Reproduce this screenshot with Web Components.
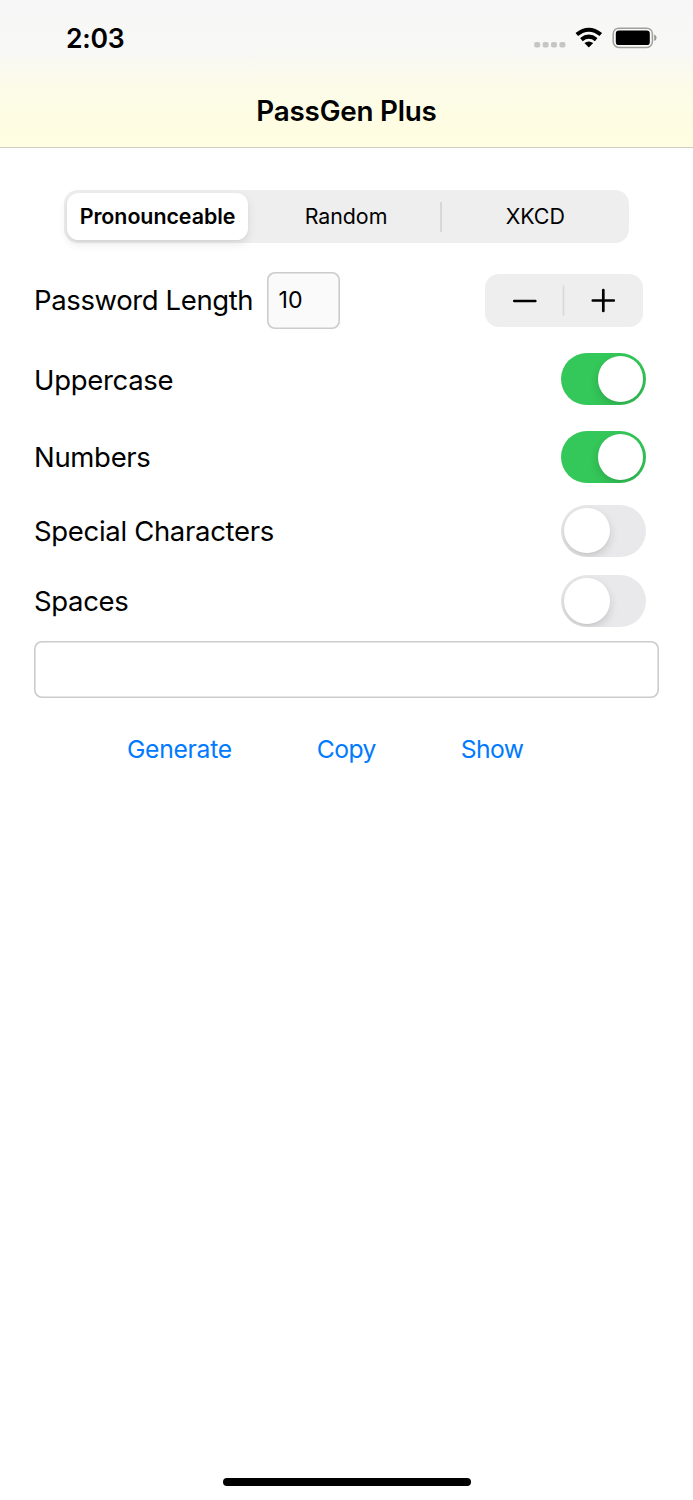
<!DOCTYPE html>
<html lang="en">
<head>
<meta charset="utf-8">
<title>PassGen Plus</title>
<style>
html,body{margin:0;background:#fff}
body{font-family:Inter,"Liberation Sans",sans-serif;color:#000}
</style>
</head>
<body>
<pass-app></pass-app>
<script>
const define=(name,html)=>customElements.define(name,class extends HTMLElement{
  constructor(){super();this.attachShadow({mode:'open'}).innerHTML=html;}
});

define('status-bar',`<style>
:host{display:flex;justify-content:space-between;height:76px;padding:0 36px 0 66px;box-sizing:border-box}
time{font-size:26.6px;font-weight:560;line-height:32px;margin-top:22px;letter-spacing:-.3px}
svg{display:block;margin-top:22px}
</style>
<time>2:03</time>
<svg width="124" height="32" viewBox="533 22 124 32">
<g fill="#c6c6c3"><rect x="534.2" y="42" width="6" height="5.6" rx="1.8"/><rect x="542.6" y="42" width="6" height="5.6" rx="1.8"/><rect x="551" y="42" width="6" height="5.6" rx="1.8"/><rect x="559.4" y="42" width="6" height="5.6" rx="1.8"/></g>
<g fill="none" stroke="#000" stroke-width="4.1"><path d="M576.8 34.5Q588.8 25 600.8 34.5"/><path d="M581.4 39.6Q588.8 33.8 596.2 39.6"/></g>
<path d="M584.4 43.1Q588.8 39.8 593.2 43.1L589.3 47Q588.8 47.5 588.3 47Z"/>
<rect x="613.2" y="28.2" width="39.2" height="19.2" rx="5.6" fill="none" stroke="#a0a09e" stroke-width="1.5"/>
<rect x="615.8" y="30.6" width="34" height="14.5" rx="3.2"/>
<path d="M654.2 34.5Q656.6 35.4 656.6 37.8Q656.6 40.2 654.2 41.1Z" fill="#999997"/>
</svg>`);

define('nav-bar',`<style>
:host{display:block;height:148px;box-sizing:border-box;border-bottom:1px solid #cfcfc0;background:linear-gradient(#f7f7f8 0,#f8f8f5 36%,#fcfbe9 58%,#fefde3 82%,#fffee2 100%)}
h1{margin:18px 0 0;text-align:center;font-size:27.8px;line-height:34px;font-weight:560;letter-spacing:-.22px}
</style><status-bar></status-bar><h1><slot></slot></h1>`);

define('segmented-control',`<style>
:host{display:grid;grid-template-columns:187.5px 189px 1fr;height:53px;margin:42px 64px 0;border-radius:14px;background:#eeeeef;align-items:center;font-size:21.4px}
span{text-align:center}
.on{box-sizing:border-box;height:47px;margin-left:3px;margin-right:3.5px;border-radius:11.5px;background:#fff;box-shadow:0 4px 10px rgba(0,0,0,.1),0 1px 2px rgba(0,0,0,.03);line-height:47px;font-weight:560;letter-spacing:-.05px}
.mid,.last{height:30px;line-height:28px;letter-spacing:-.05px}
.last{border-left:2px solid #d8d8da;margin-left:-1px}
</style><span class="on"><slot name="a"></slot></span><span class="mid"><slot name="b"></slot></span><span class="last"><slot name="c"></slot></span>`);

define('text-field',`<style>
:host{display:block;box-sizing:border-box;height:57px;border-radius:8px;background:var(--fill,#fff);box-shadow:inset 0 0 0 1.6px #ccc;padding-left:12px;font-size:23.2px;line-height:56px}
</style><slot></slot>`);

define('step-control',`<style>
:host{display:block;width:157.5px;height:53px;border-radius:14px;background:#eeeeef}
svg{display:block}
</style><svg width="157" height="53" fill="none" stroke="#000" stroke-width="2.7" stroke-linecap="round"><path d="M29.3 27H50.3M107.8 26.5H128.8M118.3 16V37"/><path d="M78.5 12V41" stroke="#d8d8da" stroke-width="1.6"/></svg>`);

define('toggle-switch',`<style>
:host{display:block;width:85px;height:52px;border-radius:26px;background:#e9e9eb;overflow:hidden}
i{display:block;width:45.5px;height:45.5px;margin:3px;border-radius:50%;background:#fff;box-shadow:0 4px 10px rgba(0,0,0,.14),0 1px 2px rgba(0,0,0,.04)}
:host([on]){background:#34c759}
:host([on]) i{margin-left:36.5px}
</style><i></i>`);

define('option-row',`<style>
:host{display:flex;align-items:center;justify-content:space-between;height:52px;font-size:27.5px;letter-spacing:-.32px}
</style><slot></slot><slot name="control"></slot>`);

define('link-button',`<style>
:host{display:block;color:#007aff;font-size:24.7px;line-height:32px;letter-spacing:-.3px}
:host(.tight){letter-spacing:-.6px}
</style><slot></slot>`);

define('home-indicator',`<style>
:host{display:block;width:248px;height:8px;border-radius:4px;background:#000;margin:auto 223px 14px 222.5px}
</style>`);

define('pass-app',`<style>
:host{display:flex;flex-direction:column;height:1500px;width:693px;background:#fff;overflow:hidden}
.length{display:flex;align-items:center;margin:29px 50.5px 0 34px;height:57px;font-size:27.5px}
.length span{letter-spacing:-.38px;padding-bottom:2px}
.length text-field{width:73.5px;margin-left:auto;margin-right:145px;--fill:#fafafa}
.options{display:flex;flex-direction:column;margin:24px 47px 0 34px}
option-row:first-child span{padding-top:2px}
option-row+option-row{margin-top:26px}
option-row:nth-child(3){margin-top:21.5px}
option-row:nth-child(4){margin-top:18.5px}
.result{margin:14px 34px 0}
.actions{display:flex;margin:35px 0 0 127px}
.actions link-button+link-button{margin-left:85px}
</style>
<nav-bar>PassGen Plus</nav-bar>
<segmented-control><span slot="a">Pronounceable</span><span slot="b">Random</span><span slot="c">XKCD</span></segmented-control>
<div class="length"><span>Password Length</span><text-field>10</text-field><step-control></step-control></div>
<div class="options">
<option-row><span>Uppercase</span><toggle-switch slot="control" on></toggle-switch></option-row>
<option-row><span>Numbers</span><toggle-switch slot="control" on></toggle-switch></option-row>
<option-row><span>Special Characters</span><toggle-switch slot="control"></toggle-switch></option-row>
<option-row><span>Spaces</span><toggle-switch slot="control"></toggle-switch></option-row>
</div>
<text-field class="result"></text-field>
<div class="actions"><link-button>Generate</link-button><link-button class="tight">Copy</link-button><link-button class="tight">Show</link-button></div>
<home-indicator></home-indicator>`);
</script>
</body>
</html>
